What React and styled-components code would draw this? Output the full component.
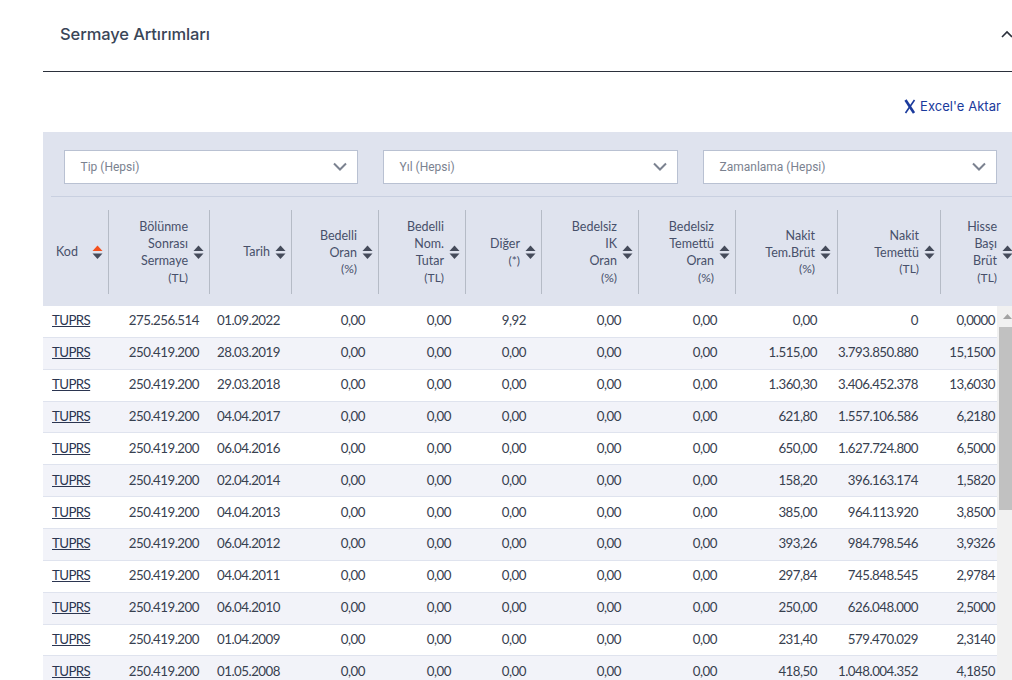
import styled, { createGlobalStyle } from "styled-components";

const columns = "66px 101px 82px 87px 87px 76px 97px 97px 102px 103px 72px";
const bodyFont = `"Lato", "Open Sans", sans-serif`;

const GlobalStyle = createGlobalStyle`
  html, body {
    margin: 0;
    padding: 0;
    background: #fff;
    overflow: hidden;
  }
  body {
    font-family: ${bodyFont};
  }
`;

const Page = styled.div`
  width: 1012px;
  height: 680px;
  overflow: hidden;
  padding-left: 43px;
  box-sizing: border-box;
`;

const SectionHead = styled.div`
  height: 72px;
  box-sizing: border-box;
  display: flex;
  align-items: center;
  justify-content: space-between;
  padding: 0 0 3px 17px;
  border-bottom: 1px solid #2b303b;
`;

const SectionTitle = styled.h2`
  margin: 0;
  font-size: 16.5px;
  font-weight: 500;
  color: #3a4557;
  font-family: "Inter", ${bodyFont};
  letter-spacing: -0.1px;
`;

const ExportRow = styled.div`
  height: 60px;
  display: flex;
  align-items: center;
  justify-content: flex-end;
  padding: 8px 11px 0 0;
  box-sizing: border-box;
`;

const ExportLink = styled.a`
  display: flex;
  align-items: center;
  gap: 4px;
  color: #1a3a9c;
  font-size: 13px;
  font-family: "Inter", ${bodyFont};
  letter-spacing: 0.05px;
`;

const Panel = styled.div`
  background: #dfe3ee;
  height: 174px;
`;

const Filters = styled.div`
  display: grid;
  grid-template-columns: 294px 295px 294px;
  column-gap: 25px;
  padding: 18px 15px 0 21px;
`;

const Select = styled.div`
  height: 34px;
  background: #fff;
  border: 1px solid #b9c1d2;
  box-sizing: border-box;
  display: flex;
  align-items: center;
  justify-content: space-between;
  padding: 0 9px 0 15.5px;
  font-family: "Roboto", sans-serif;
  font-size: 12px;
  color: #7b8290;
`;

const PanelRule = styled.div`
  margin: 12px 0 13px 8px;
  border-top: 1px solid #c9d0e0;
`;

const HeaderBar = styled.div`
  display: grid;
  grid-template-columns: ${columns};
`;

const HeaderCell = styled.div`
  height: 84px;
  display: flex;
  align-items: center;
  justify-content: ${(p) => (p.$left ? "space-between" : "flex-end")};
  gap: 5px;
  padding: 0 ${(p) => p.$pr}px 0 ${(p) => (p.$left ? 13 : 0)}px;
  box-sizing: border-box;
  border-right: ${(p) => (p.$last ? "none" : "1px solid #b5bbc6")};
  white-space: nowrap;
`;

const HeaderLabel = styled.div`
  text-align: right;
  font-size: 12.5px;
  line-height: 16.8px;
  color: #47506a;
`;

const Unit = styled.div`
  font-size: 12px;
  line-height: 15px;
`;

const Body = styled.div`
  position: relative;
`;

const Row = styled.div`
  display: grid;
  grid-template-columns: ${columns};
  height: 31.87px;
  padding-bottom: 2px;
  box-sizing: border-box;
  align-items: center;
  background: ${(p) => (p.$odd ? "#f2f3f9" : "#fff")};
  border-bottom: 1px solid #dfe3ee;
  font-size: 13.3px;
  color: #37404f;
  letter-spacing: -0.5px;
`;

const Cell = styled.div`
  text-align: right;
  padding-right: ${(p) => p.$pr}px;
  white-space: nowrap;
`;

const CodeCell = styled.div`
  padding-left: 9px;
`;

const CodeLink = styled.a`
  color: #2b3550;
  text-decoration: underline;
  letter-spacing: -0.6px;
`;

const ScrollTrack = styled.div`
  position: absolute;
  top: 0;
  left: 954px;
  bottom: 0;
  width: 20px;
  background: #f1f1f1;
`;

const ScrollUp = styled.div`
  height: 21px;
  display: flex;
  justify-content: center;
  padding-top: 8px;
  box-sizing: border-box;
`;

const ScrollThumb = styled.div`
  height: 183px;
  margin-left: 2px;
  background: #c1c1c1;
`;

const SortIcon = ({ active }) => (
  <svg width="11" height="15" viewBox="0 0 11 15" style={{ flexShrink: 0 }}>
    <path d="M5.5 0.5 L10.5 6 L0.5 6 Z" fill={active ? "#f4511e" : "#454b5a"} />
    <path d="M0.5 8.5 L10.5 8.5 L5.5 14 Z" fill="#454b5a" />
  </svg>
);

const Chevron = () => (
  <svg width="16" height="10" viewBox="0 0 16 10">
    <path d="M2 1.5 L8 7.5 L14 1.5" fill="none" stroke="#7b8290" strokeWidth="2" />
  </svg>
);

const headers = [
  { lines: ["Kod"], pr: 5, left: true },
  { lines: ["Bölünme", "Sonrası", "Sermaye"], unit: "(TL)", pr: 5 },
  { lines: ["Tarih"], pr: 5 },
  { lines: ["Bedelli", "Oran"], unit: "(%)", pr: 5 },
  { lines: ["Bedelli", "Nom.", "Tutar"], unit: "(TL)", pr: 5 },
  { lines: ["Diğer"], unit: "(*)", pr: 5 },
  { lines: ["Bedelsiz", "IK", "Oran"], unit: "(%)", pr: 5 },
  { lines: ["Bedelsiz", "Temettü", "Oran"], unit: "(%)", pr: 5 },
  { lines: ["Nakit", "Tem.Brüt"], unit: "(%)", pr: 6 },
  { lines: ["Nakit", "Temettü"], unit: "(TL)", pr: 5 },
  { lines: ["Hisse", "Başı", "Brüt"], unit: "(TL)", last: true, pr: 0 },
];

const paddings = [0, 11, 12, 14, 15, 16, 18, 19, 21, 23, 18];

const rows = [
  ["275.256.514", "01.09.2022", "9,92", "0,00", "0", "0,0000"],
  ["250.419.200", "28.03.2019", "0,00", "1.515,00", "3.793.850.880", "15,1500"],
  ["250.419.200", "29.03.2018", "0,00", "1.360,30", "3.406.452.378", "13,6030"],
  ["250.419.200", "04.04.2017", "0,00", "621,80", "1.557.106.586", "6,2180"],
  ["250.419.200", "06.04.2016", "0,00", "650,00", "1.627.724.800", "6,5000"],
  ["250.419.200", "02.04.2014", "0,00", "158,20", "396.163.174", "1,5820"],
  ["250.419.200", "04.04.2013", "0,00", "385,00", "964.113.920", "3,8500"],
  ["250.419.200", "06.04.2012", "0,00", "393,26", "984.798.546", "3,9326"],
  ["250.419.200", "04.04.2011", "0,00", "297,84", "745.848.545", "2,9784"],
  ["250.419.200", "06.04.2010", "0,00", "250,00", "626.048.000", "2,5000"],
  ["250.419.200", "01.04.2009", "0,00", "231,40", "579.470.029", "2,3140"],
  ["250.419.200", "01.05.2008", "0,00", "418,50", "1.048.004.352", "4,1850"],
];

export default function App() {
  return (
    <Page>
      <GlobalStyle />
      <SectionHead>
        <SectionTitle>Sermaye Artırımları</SectionTitle>
        <svg width="12" height="8" viewBox="0 0 12 8" style={{ marginRight: -1 }}>
          <path d="M1 7 L6 2 L11 7" fill="none" stroke="#2b303b" strokeWidth="1.6" />
        </svg>
      </SectionHead>
      <ExportRow>
        <ExportLink>
          <svg width="12" height="15" viewBox="0 0 12 15">
            <path d="M1.5 1 L10 14" fill="none" stroke="#1a3a9c" strokeWidth="2.6" />
            <path d="M10.5 1 L1.5 14" fill="none" stroke="#1a3a9c" strokeWidth="1.6" />
          </svg>
          Excel'e Aktar
        </ExportLink>
      </ExportRow>
      <Panel>
        <Filters>
          <Select>Tip (Hepsi)<Chevron /></Select>
          <Select>Yıl (Hepsi)<Chevron /></Select>
          <Select>Zamanlama (Hepsi)<Chevron /></Select>
        </Filters>
        <PanelRule />
        <HeaderBar>
          {headers.map((h, i) => (
            <HeaderCell key={i} $left={h.left} $last={h.last} $pr={h.pr}>
              <HeaderLabel>
                {h.lines.map((l) => (
                  <div key={l}>{l}</div>
                ))}
                {h.unit && <Unit>{h.unit}</Unit>}
              </HeaderLabel>
              <SortIcon active={i === 0} />
            </HeaderCell>
          ))}
        </HeaderBar>
      </Panel>
      <Body>
        {rows.map((r, i) => (
          <Row key={i} $odd={i % 2 === 1}>
            <CodeCell>
              <CodeLink>TUPRS</CodeLink>
            </CodeCell>
            <Cell $pr={paddings[1]}>{r[0]}</Cell>
            <Cell $pr={paddings[2]}>{r[1]}</Cell>
            <Cell $pr={paddings[3]}>0,00</Cell>
            <Cell $pr={paddings[4]}>0,00</Cell>
            <Cell $pr={paddings[5]}>{r[2]}</Cell>
            <Cell $pr={paddings[6]}>0,00</Cell>
            <Cell $pr={paddings[7]}>0,00</Cell>
            <Cell $pr={paddings[8]}>{r[3]}</Cell>
            <Cell $pr={paddings[9]}>{r[4]}</Cell>
            <Cell $pr={paddings[10]}>{r[5]}</Cell>
          </Row>
        ))}
        <ScrollTrack>
          <ScrollUp>
            <svg width="9" height="5" viewBox="0 0 9 5">
              <path d="M4.5 0 L9 5 L0 5 Z" fill="#a3a3a3" />
            </svg>
          </ScrollUp>
          <ScrollThumb />
        </ScrollTrack>
      </Body>
    </Page>
  );
}
